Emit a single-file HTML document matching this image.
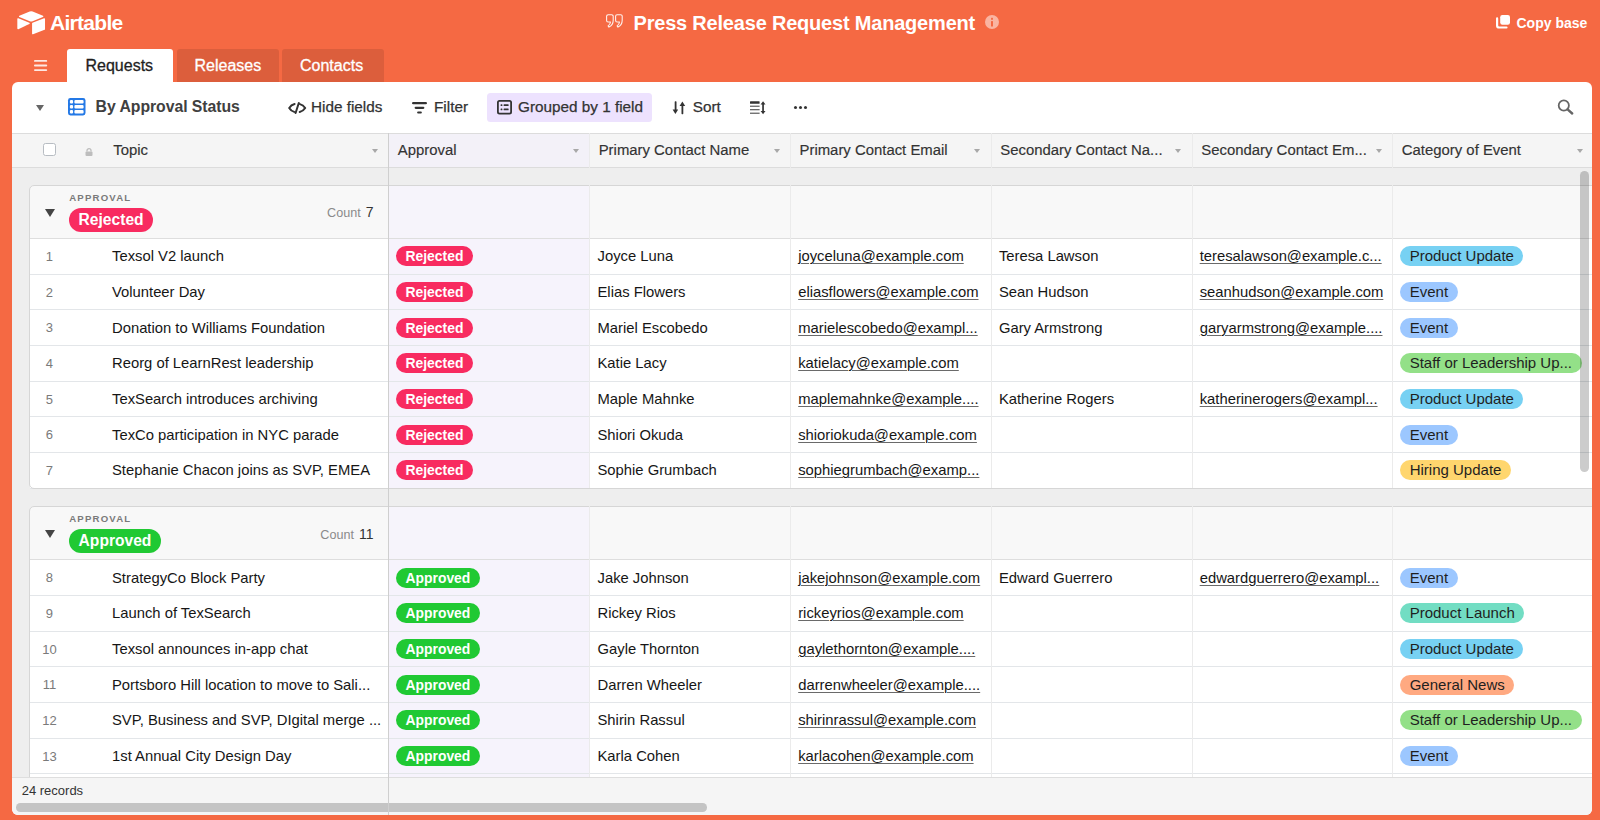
<!DOCTYPE html>
<html><head><meta charset="utf-8"><title>Press Release Request Management</title>
<style>
*{box-sizing:border-box;margin:0;padding:0}
html,body{width:1600px;height:820px;overflow:hidden}
body{background:#F56943;font-family:"Liberation Sans",sans-serif;position:relative;color:#1f1f1f}
.a{position:absolute;white-space:nowrap}
.t{position:absolute;white-space:nowrap;line-height:0;margin-top:-0.3465em}
svg{position:absolute;overflow:visible}
/* top */
.logo-t{left:50px;top:30.75px;font-size:21px;font-weight:bold;color:#fff;letter-spacing:-0.7px}
.title{left:633.5px;top:30px;font-size:20px;font-weight:bold;color:#fff;letter-spacing:-0.2px}
.copy{left:1516.5px;top:27.5px;font-size:14px;font-weight:bold;color:#fff}
.tab{position:absolute;top:48.7px;height:34px;border-radius:3px 3px 0 0;background:rgba(0,0,0,0.1)}
.tabt{font-size:16px;color:#fff;top:72px;-webkit-text-stroke:0.3px currentColor}
/* card */
.card{position:absolute;left:12px;top:82px;width:1580px;height:733px;background:#fff;border-radius:6px;overflow:hidden}
.inner{position:absolute;left:-12px;top:-82px;width:1600px;height:820px}
.tb{font-size:15.3px;color:#333;top:112.5px;-webkit-text-stroke:0.25px #333}
.hdr{position:absolute;left:0;top:133px;width:1600px;height:34.5px;background:#f5f5f5;border-top:1px solid #dcdcdc;border-bottom:1px solid #dcdcdc}
.hdt{font-size:14.9px;color:#333;top:155.3px;-webkit-text-stroke:0.15px #333}
.arr{position:absolute;top:148.7px;width:0;height:0;border-left:3.3px solid transparent;border-right:3.3px solid transparent;border-top:4.2px solid #a8a8a8}
.gap{position:absolute;left:12px;top:167.5px;width:1600px;height:610px;background:#eeeeee}
.apcol{position:absolute;left:389px;width:201px;background:#f6f3fc}
.vb{position:absolute;width:1px;background:#ebebeb}
.pb{position:absolute;left:388px;top:133px;width:1.3px;height:690px;background:#cfcfcf}
/* groups */
.gbox{position:absolute;left:29px;width:1600px;border:1px solid #d6d6d6;border-radius:5px}
.ghead{position:absolute;left:30px;width:1600px;height:54.5px;background:#f8f8f8;border-radius:5px 0 0 0;border-bottom:1px solid #dedede}
.gtri{position:absolute;left:14.6px;top:24.5px;width:0;height:0;border-left:5.3px solid transparent;border-right:5.3px solid transparent;border-top:8px solid #444}
.glab{position:absolute;left:39.2px;top:16.5px;line-height:0;margin-top:-0.3465em;font-size:9.6px;letter-spacing:1.2px;color:#7a7a7a;font-weight:bold}
.gpill{position:absolute;left:39px;top:23.4px;height:24px;line-height:24px;border-radius:12px;padding:0 9.6px;font-size:15.6px;font-weight:bold;color:#fff}
.gcount{position:absolute;right:1256.5px;top:32.2px;line-height:0;margin-top:-4.37px;font-size:12.6px;color:#8a8a8a;white-space:nowrap}
.gcount b{font-weight:normal;font-size:14px;color:#333;margin-left:1.5px}
.rej{background:#f82b60}
.app{background:#20c933}
.row{position:absolute;left:30px;width:1600px;height:35.67px;border-bottom:1px solid #e3e6e9;background:#fff}
.row .ac{position:absolute;left:359px;top:0;width:201px;height:100%;background:#f6f3fc}
.rn{position:absolute;left:0;width:38.8px;text-align:center;top:22.5px;line-height:0;margin-top:-0.3465em;font-size:13px;color:#7a7a7a}
.topic{position:absolute;left:82px;top:22.5px;line-height:0;margin-top:-0.3465em;font-size:14.8px;color:#161616;white-space:nowrap}
.tx{position:absolute;top:22.5px;line-height:0;margin-top:-0.3465em;font-size:14.8px;color:#161616;white-space:nowrap;margin-left:-30px}
.em{text-decoration:underline;text-decoration-color:#6a6a6a;text-decoration-thickness:1px;text-underline-offset:2px}
.sp{position:absolute;top:7.3px;height:20px;line-height:20px;border-radius:10px;padding:0 9.4px;font-size:13.9px;font-weight:bold;color:#fff;margin-left:-30px}
.cp{position:absolute;top:7.3px;height:20px;line-height:20px;border-radius:10px;padding:0 9.5px;font-size:15px;color:#1f1f1f;margin-left:-30px;white-space:nowrap}
.foot{position:absolute;left:0;top:777px;width:1600px;height:40px;background:#f5f5f5;border-top:1px solid #dedede}
</style></head><body>
<!-- logo -->
<svg style="left:16.5px;top:10.5px" width="28.5" height="24" viewBox="9 10 182 152"><path fill="#fff" d="M90.039 12.368 24.079 39.66c-3.667 1.519-3.63 6.729.062 8.192l66.235 26.266a24.58 24.58 0 0 0 18.12 0l66.236-26.266c3.69-1.463 3.729-6.673.06-8.191l-65.96-27.293a24.58 24.58 0 0 0-18.793 0"/><path fill="#fff" d="M105.312 88.46v65.617c0 3.12 3.147 5.258 6.048 4.108l73.806-28.648a4.42 4.42 0 0 0 2.79-4.108V59.813c0-3.121-3.147-5.258-6.048-4.108l-73.806 28.648a4.42 4.42 0 0 0-2.79 4.108"/><path fill="#fff" d="m88.078 91.846-21.904 10.576-2.224 1.075-46.238 22.155c-2.93 1.414-6.672-.722-6.672-3.978V60.088c0-1.178.604-2.195 1.414-2.96a5 5 0 0 1 1.12-.84c1.104-.663 2.68-.84 4.02-.31L87.71 83.76c3.564 1.414 3.844 6.408.368 8.087"/></svg>
<div class="t logo-t">Airtable</div>
<!-- title -->
<svg style="left:606px;top:14.2px" width="18.5" height="14" viewBox="0 0 18.5 14"><g fill="none" stroke="#fff" stroke-opacity="0.9" stroke-width="1.1" stroke-linejoin="round"><path d="M2.1 0.8h3.6a1.5 1.5 0 0 1 1.5 1.5v4c0 3-1.5 5.5-4.2 6.8l-0.9-1.2c1.4-0.9 2.2-2.3 2.4-3.9h-2.4a1.5 1.5 0 0 1-1.5-1.5v-4.2a1.5 1.5 0 0 1 1.5-1.5z"/><path d="M11.1 0.8h3.6a1.5 1.5 0 0 1 1.5 1.5v4c0 3-1.5 5.5-4.2 6.8l-0.9-1.2c1.4-0.9 2.2-2.3 2.4-3.9h-2.4a1.5 1.5 0 0 1-1.5-1.5v-4.2a1.5 1.5 0 0 1 1.5-1.5z"/></g></svg>
<div class="t title">Press Release Request Management</div>
<svg style="left:985px;top:15.2px" width="14" height="14" viewBox="0 0 14 14"><circle cx="7" cy="7" r="7" fill="#fff" fill-opacity="0.5"/><rect x="6" y="2.8" width="2" height="2" rx="0.5" fill="#F56943"/><rect x="6" y="5.9" width="2" height="5.6" rx="0.5" fill="#F56943"/></svg>
<!-- copy base -->
<svg style="left:1496px;top:15.3px" width="14" height="14" viewBox="0 0 14 14"><rect x="4.2" y="0" width="9.8" height="9.8" rx="2.2" fill="#fff"/><path d="M1.1 3.4v7a2.1 2.1 0 0 0 2.1 2.1h7.3" fill="none" stroke="#fff" stroke-width="2.2" stroke-linecap="round"/></svg>
<div class="t copy">Copy base</div>
<!-- tabs -->
<svg style="left:33.5px;top:60px" width="13.2" height="11" viewBox="0 0 13.2 11"><g fill="#fff" fill-opacity="0.85"><rect x="0" y="0" width="13.2" height="1.8" rx="0.9"/><rect x="0" y="4.6" width="13.2" height="1.8" rx="0.9"/><rect x="0" y="9.2" width="13.2" height="1.8" rx="0.9"/></g></svg>
<div class="tab" style="left:67px;width:106px;background:#fff"></div>
<div class="tab" style="left:176.6px;width:102px"></div>
<div class="tab" style="left:282.3px;width:102.2px"></div>
<div class="t tabt" style="left:85.5px;color:#1f1f1f">Requests</div>
<div class="t tabt" style="left:194.5px">Releases</div>
<div class="t tabt" style="left:300px">Contacts</div>

<div class="card"><div class="inner">
<!-- toolbar -->
<div style="position:absolute;left:36px;top:104.6px;width:0;height:0;border-left:4.3px solid transparent;border-right:4.3px solid transparent;border-top:6.5px solid #666"></div>
<svg style="left:68px;top:98.3px" width="17.5" height="17.5" viewBox="0 0 17.5 17.5"><rect x="0" y="0" width="17.5" height="17.5" rx="2.4" fill="#2479e6"/><g fill="#fff"><rect x="1.9" y="2" width="3.2" height="3.5" rx="1.1"/><rect x="6.4" y="2" width="9.2" height="3.5" rx="1.1"/><rect x="1.9" y="7" width="3.2" height="3.5" rx="1.1"/><rect x="6.4" y="7" width="9.2" height="3.5" rx="1.1"/><rect x="1.9" y="12" width="3.2" height="3.5" rx="1.1"/><rect x="6.4" y="12" width="9.2" height="3.5" rx="1.1"/></g></svg>
<div class="t" style="left:95.6px;top:112.6px;font-size:15.8px;font-weight:bold;color:#404040;letter-spacing:-0.05px">By Approval Status</div>
<!-- hide fields -->
<svg style="left:287.5px;top:101.5px" width="18.5" height="12" viewBox="0 0 18.5 12"><g fill="none" stroke="#333" stroke-width="2" stroke-linecap="round" stroke-linejoin="round"><path d="M6.6 2C4.3 2.6 2.4 4.1 1.2 6c1.1 1.9 3 3.3 5 3.9"/><path d="M11.9 2.1c2.2.6 4.1 2.1 5.3 3.9-1.2 1.9-3.1 3.4-5.5 4"/><path d="M10.8 1 7.6 11"/></g></svg>
<div class="t tb" style="left:311px">Hide fields</div>
<svg style="left:412px;top:102px" width="15" height="12" viewBox="0 0 15 12"><g fill="#333"><rect x="0" y="0" width="15" height="2.3" rx="1.15"/><rect x="2.6" y="4.7" width="9.8" height="2.2" rx="1.1"/><rect x="5.1" y="9.4" width="4.8" height="2.2" rx="1.1"/></g></svg>
<div class="t tb" style="left:434px">Filter</div>
<div style="position:absolute;left:487px;top:93px;width:165.3px;height:28.5px;border-radius:3.5px;background:#ede2fe"></div>
<svg style="left:497px;top:100px" width="15" height="14.5" viewBox="0 0 15 14.5"><rect x="0.9" y="0.9" width="13.2" height="12.7" rx="1.6" fill="none" stroke="#333" stroke-width="1.8"/><g fill="#333"><rect x="3.6" y="4.2" width="1.8" height="1.8" rx="0.5"/><rect x="6.6" y="4.2" width="5" height="1.8" rx="0.5"/><rect x="3.6" y="8.4" width="1.8" height="1.8" rx="0.5"/><rect x="6.6" y="8.4" width="5" height="1.8" rx="0.5"/></g></svg>
<div class="t tb" style="left:518px">Grouped by 1 field</div>
<svg style="left:671.5px;top:100.5px" width="14" height="13.5" viewBox="0 0 14 13.5"><g fill="#333"><rect x="2.7" y="0.3" width="1.8" height="9" rx="0.6"/><path d="M0.6 8.4h5.6l-2.8 4.6z"/><rect x="9.5" y="4.2" width="1.8" height="9" rx="0.6"/><path d="M7.6 5.1h5.6l-2.8-4.6z"/></g></svg>
<div class="t tb" style="left:692.8px">Sort</div>
<svg style="left:750px;top:100.5px" width="16" height="13.5" viewBox="0 0 16 13.5"><g fill="#333"><rect x="0" y="0.2" width="9.6" height="2.6" rx="0.6"/><rect x="0" y="4.6" width="9.6" height="1.3" opacity="0.75"/><rect x="0" y="8" width="9.6" height="1.3" opacity="0.75"/><rect x="0" y="11.6" width="9.6" height="1.3" opacity="0.75"/><rect x="12.2" y="2.5" width="1.7" height="8.5"/><path d="M10.6 3.4h4.9l-2.45-3.2z M10.6 10.1h4.9l-2.45 3.2z"/></g></svg>
<svg style="left:793.5px;top:106px" width="13" height="3" viewBox="0 0 13 3"><g fill="#333"><circle cx="1.5" cy="1.5" r="1.5"/><circle cx="6.5" cy="1.5" r="1.5"/><circle cx="11.5" cy="1.5" r="1.5"/></g></svg>
<svg style="left:1556.5px;top:99px" width="17" height="16" viewBox="0 0 17 16"><circle cx="6.8" cy="6.5" r="5.1" fill="none" stroke="#666" stroke-width="1.8"/><path d="M10.6 10.3l4.6 4.2" stroke="#666" stroke-width="2.4" stroke-linecap="round"/></svg>

<!-- grid bg -->
<div class="gap"></div>
<div class="hdr"></div>
<div style="position:absolute;left:389px;top:134px;width:201px;height:33px;background:#f3f1f8"></div>
<div class="ghead" style="top:184.50px">
<div style="position:absolute;left:359px;top:0;width:201px;height:100%;background:#f6f4fb"></div><div class="gtri"></div><div class="glab">APPROVAL</div>
<span class="gpill rej">Rejected</span>
<div class="gcount">Count <b>7</b></div>
</div>
<div class="row" style="top:239.00px">
<div class="rn">1</div><div class="topic">Texsol V2 launch</div>
<div class="ac"></div><span class="sp rej" style="left:396.1px">Rejected</span>
<div class="tx" style="left:597.5px">Joyce Luna</div>
<div class="tx em" style="left:798.2px">joyceluna@example.com</div>
<div class="tx" style="left:998.9px">Teresa Lawson</div>
<div class="tx em" style="left:1199.7px">teresalawson@example.c...</div>
<span class="cp" style="left:1400.2px;background:#77d1f3">Product Update</span>
</div>
<div class="row" style="top:274.67px">
<div class="rn">2</div><div class="topic">Volunteer Day</div>
<div class="ac"></div><span class="sp rej" style="left:396.1px">Rejected</span>
<div class="tx" style="left:597.5px">Elias Flowers</div>
<div class="tx em" style="left:798.2px">eliasflowers@example.com</div>
<div class="tx" style="left:998.9px">Sean Hudson</div>
<div class="tx em" style="left:1199.7px">seanhudson@example.com</div>
<span class="cp" style="left:1400.2px;background:#9cc7ff">Event</span>
</div>
<div class="row" style="top:310.34px">
<div class="rn">3</div><div class="topic">Donation to Williams Foundation</div>
<div class="ac"></div><span class="sp rej" style="left:396.1px">Rejected</span>
<div class="tx" style="left:597.5px">Mariel Escobedo</div>
<div class="tx em" style="left:798.2px">marielescobedo@exampl...</div>
<div class="tx" style="left:998.9px">Gary Armstrong</div>
<div class="tx em" style="left:1199.7px">garyarmstrong@example....</div>
<span class="cp" style="left:1400.2px;background:#9cc7ff">Event</span>
</div>
<div class="row" style="top:346.01px">
<div class="rn">4</div><div class="topic">Reorg of LearnRest leadership</div>
<div class="ac"></div><span class="sp rej" style="left:396.1px">Rejected</span>
<div class="tx" style="left:597.5px">Katie Lacy</div>
<div class="tx em" style="left:798.2px">katielacy@example.com</div>
<span class="cp" style="left:1400.2px;background:#93e088">Staff or Leadership Up...</span>
</div>
<div class="row" style="top:381.68px">
<div class="rn">5</div><div class="topic">TexSearch introduces archiving</div>
<div class="ac"></div><span class="sp rej" style="left:396.1px">Rejected</span>
<div class="tx" style="left:597.5px">Maple Mahnke</div>
<div class="tx em" style="left:798.2px">maplemahnke@example....</div>
<div class="tx" style="left:998.9px">Katherine Rogers</div>
<div class="tx em" style="left:1199.7px">katherinerogers@exampl...</div>
<span class="cp" style="left:1400.2px;background:#77d1f3">Product Update</span>
</div>
<div class="row" style="top:417.35px">
<div class="rn">6</div><div class="topic">TexCo participation in NYC parade</div>
<div class="ac"></div><span class="sp rej" style="left:396.1px">Rejected</span>
<div class="tx" style="left:597.5px">Shiori Okuda</div>
<div class="tx em" style="left:798.2px">shioriokuda@example.com</div>
<span class="cp" style="left:1400.2px;background:#9cc7ff">Event</span>
</div>
<div class="row" style="top:453.02px">
<div class="rn">7</div><div class="topic">Stephanie Chacon joins as SVP, EMEA</div>
<div class="ac"></div><span class="sp rej" style="left:396.1px">Rejected</span>
<div class="tx" style="left:597.5px">Sophie Grumbach</div>
<div class="tx em" style="left:798.2px">sophiegrumbach@examp...</div>
<span class="cp" style="left:1400.2px;background:#ffd66e">Hiring Update</span>
</div>
<div class="gbox" style="top:184.50px;height:304.49px"></div>
<div class="ghead" style="top:505.80px">
<div style="position:absolute;left:359px;top:0;width:201px;height:100%;background:#f6f4fb"></div><div class="gtri"></div><div class="glab">APPROVAL</div>
<span class="gpill app">Approved</span>
<div class="gcount">Count <b>11</b></div>
</div>
<div class="row" style="top:560.30px">
<div class="rn">8</div><div class="topic">StrategyCo Block Party</div>
<div class="ac"></div><span class="sp app" style="left:396.1px">Approved</span>
<div class="tx" style="left:597.5px">Jake Johnson</div>
<div class="tx em" style="left:798.2px">jakejohnson@example.com</div>
<div class="tx" style="left:998.9px">Edward Guerrero</div>
<div class="tx em" style="left:1199.7px">edwardguerrero@exampl...</div>
<span class="cp" style="left:1400.2px;background:#9cc7ff">Event</span>
</div>
<div class="row" style="top:595.97px">
<div class="rn">9</div><div class="topic">Launch of TexSearch</div>
<div class="ac"></div><span class="sp app" style="left:396.1px">Approved</span>
<div class="tx" style="left:597.5px">Rickey Rios</div>
<div class="tx em" style="left:798.2px">rickeyrios@example.com</div>
<span class="cp" style="left:1400.2px;background:#72ddc3">Product Launch</span>
</div>
<div class="row" style="top:631.64px">
<div class="rn">10</div><div class="topic">Texsol announces in-app chat</div>
<div class="ac"></div><span class="sp app" style="left:396.1px">Approved</span>
<div class="tx" style="left:597.5px">Gayle Thornton</div>
<div class="tx em" style="left:798.2px">gaylethornton@example....</div>
<span class="cp" style="left:1400.2px;background:#77d1f3">Product Update</span>
</div>
<div class="row" style="top:667.31px">
<div class="rn">11</div><div class="topic">Portsboro Hill location to move to Sali...</div>
<div class="ac"></div><span class="sp app" style="left:396.1px">Approved</span>
<div class="tx" style="left:597.5px">Darren Wheeler</div>
<div class="tx em" style="left:798.2px">darrenwheeler@example....</div>
<span class="cp" style="left:1400.2px;background:#ffa981">General News</span>
</div>
<div class="row" style="top:702.98px">
<div class="rn">12</div><div class="topic">SVP, Business and SVP, DIgital merge ...</div>
<div class="ac"></div><span class="sp app" style="left:396.1px">Approved</span>
<div class="tx" style="left:597.5px">Shirin Rassul</div>
<div class="tx em" style="left:798.2px">shirinrassul@example.com</div>
<span class="cp" style="left:1400.2px;background:#93e088">Staff or Leadership Up...</span>
</div>
<div class="row" style="top:738.65px">
<div class="rn">13</div><div class="topic">1st Annual City Design Day</div>
<div class="ac"></div><span class="sp app" style="left:396.1px">Approved</span>
<div class="tx" style="left:597.5px">Karla Cohen</div>
<div class="tx em" style="left:798.2px">karlacohen@example.com</div>
<span class="cp" style="left:1400.2px;background:#9cc7ff">Event</span>
</div>
<div class="row" style="top:774.32px"><div class="ac"></div></div>
<div class="gbox" style="top:505.80px;height:348.82px"></div>
<div class="vb" style="left:589.0px;top:133px;height:34.5px"></div><div class="vb" style="left:789.9px;top:133px;height:34.5px"></div><div class="vb" style="left:990.9px;top:133px;height:34.5px"></div><div class="vb" style="left:1191.8px;top:133px;height:34.5px"></div><div class="vb" style="left:1392.2px;top:133px;height:34.5px"></div><div class="vb" style="left:589.0px;top:184.5px;height:303.5px"></div><div class="vb" style="left:789.9px;top:184.5px;height:303.5px"></div><div class="vb" style="left:990.9px;top:184.5px;height:303.5px"></div><div class="vb" style="left:1191.8px;top:184.5px;height:303.5px"></div><div class="vb" style="left:1392.2px;top:184.5px;height:303.5px"></div><div class="vb" style="left:589.0px;top:505.8px;height:271.2px"></div><div class="vb" style="left:789.9px;top:505.8px;height:271.2px"></div><div class="vb" style="left:990.9px;top:505.8px;height:271.2px"></div><div class="vb" style="left:1191.8px;top:505.8px;height:271.2px"></div><div class="vb" style="left:1392.2px;top:505.8px;height:271.2px"></div>
<!-- header contents -->
<div style="position:absolute;left:43px;top:143px;width:12.5px;height:12.5px;border:1.2px solid #b7bcc2;border-radius:2.5px;background:#fff"></div>
<svg style="left:85px;top:148px" width="8" height="8" viewBox="0 0 8 8"><path d="M2 3.6V2.6a2 2 0 0 1 4 0v1" fill="none" stroke="#bdbdbd" stroke-width="1.3"/><rect x="0.5" y="3.5" width="7" height="4.5" rx="1" fill="#bdbdbd"/></svg>
<div class="t hdt" style="left:113.3px">Topic</div><div class="arr" style="left:372px"></div>
<div class="t hdt" style="left:397.8px">Approval</div><div class="arr" style="left:572.8px"></div>
<div class="t hdt" style="left:598.7px">Primary Contact Name</div><div class="arr" style="left:773.5px"></div>
<div class="t hdt" style="left:799.5px">Primary Contact Email</div><div class="arr" style="left:974.3px"></div>
<div class="t hdt" style="left:1000.3px">Secondary Contact Na...</div><div class="arr" style="left:1175.3px"></div>
<div class="t hdt" style="left:1201.3px">Secondary Contact Em...</div><div class="arr" style="left:1376px"></div>
<div class="t hdt" style="left:1401.8px">Category of Event</div><div class="arr" style="left:1576.5px"></div>
<div class="pb"></div>
<!-- footer -->
<div class="foot"></div>
<div class="t" style="left:21.7px;top:795.6px;font-size:13px;color:#333">24 records</div>
<div style="position:absolute;left:16px;top:803.2px;width:691px;height:8.5px;border-radius:4.3px;background:#c4c4c4"></div>
<div style="position:absolute;left:388px;top:777px;width:1.3px;height:40px;background:#cfcfcf"></div>
<div style="position:absolute;left:1580px;top:171px;width:8.8px;height:301px;border-radius:4.4px;background:rgba(0,0,0,0.2)"></div>
</div></div>
</body></html>
